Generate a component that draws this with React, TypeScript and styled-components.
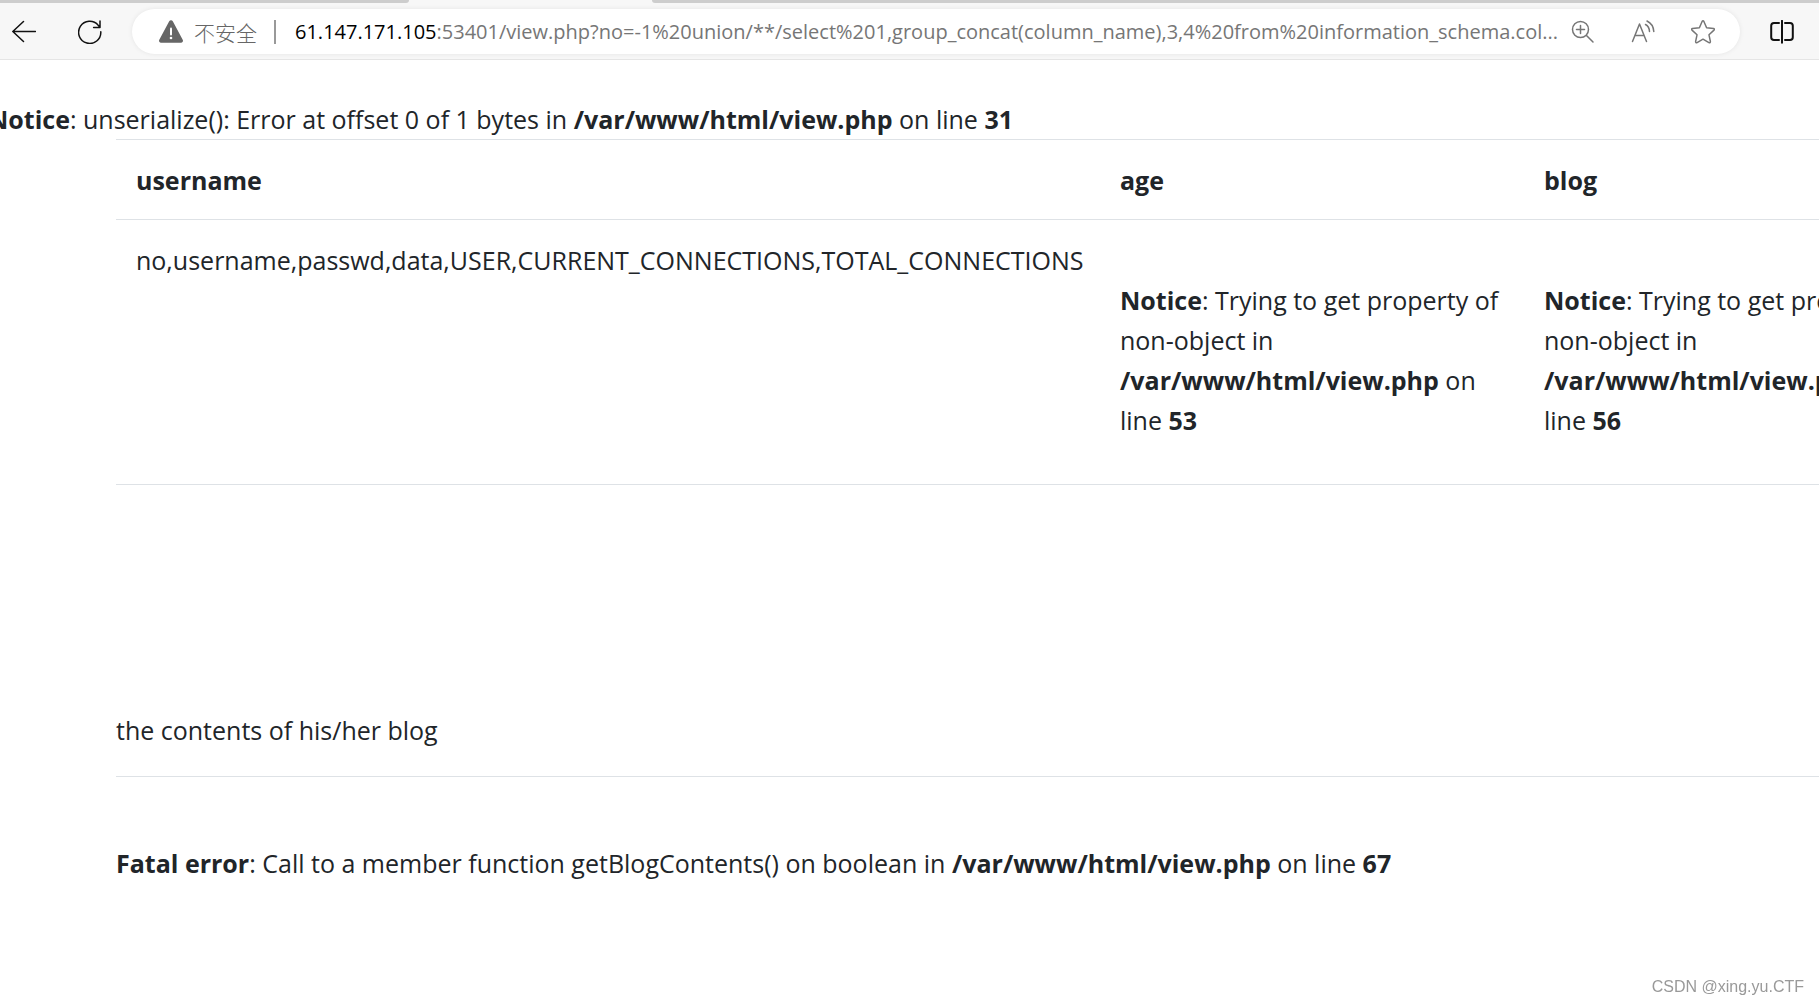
import React from "react";
import styled, { createGlobalStyle } from "styled-components";

const GlobalStyle = createGlobalStyle`
  *, *::before, *::after { box-sizing: border-box; }
  html, body { margin: 0; background: #fff; overflow: hidden; }
  body {
    font-family: "Open Sans", "Noto Sans", "Noto Sans CJK SC", sans-serif;
    font-size: 25px;
    line-height: 40px;
    color: #212529;
  }
`;

const Header = styled.header`
  background: #f7f7f7;
  border-bottom: 1px solid #e5e5e5;
`;

const TabStrip = styled.div`
  display: flex;
  justify-content: space-between;
  gap: 243px;
  height: 3px;
`;

const InactiveTabs = styled.div<{ $side: "left" | "right" }>`
  background: #cdcdcd;
  flex: ${(p) => (p.$side === "left" ? "0 0 409px" : "1 1 auto")};
  border-radius: ${(p) => (p.$side === "left" ? "0 0 4px 0" : "0 0 0 4px")};
`;

const Toolbar = styled.div`
  display: flex;
  align-items: center;
  gap: 30px;
  padding: 6px 25px 5px 12px;
`;

const NavButtons = styled.nav`
  display: flex;
  gap: 42px;
`;

const IconButton = styled.button<{ $color?: string }>`
  display: flex;
  flex: none;
  width: 24px;
  height: 24px;
  padding: 0;
  border: 0;
  background: none;
  color: ${(p) => p.$color ?? "#111"};
`;

const AddressBar = styled.div`
  display: flex;
  flex: 1;
  align-items: center;
  min-width: 0;
  height: 45px;
  padding: 0 25px 0 27px;
  border-radius: 23px;
  background: #fff;
  box-shadow: 0 0 5px rgba(0, 0, 0, 0.08);
  font-size: 20px;
  line-height: 28px;
`;

const SecurityButton = styled.button`
  display: flex;
  flex: none;
  align-items: center;
  gap: 11px;
  padding: 0;
  border: 0;
  background: none;
  color: #666;
  font: 21px/26px "Noto Sans CJK SC", sans-serif;
  font-weight: 300;
`;

const Divider = styled.span`
  flex: none;
  width: 2px;
  height: 24px;
  margin: 0 19px 0 17px;
  background: #999;
`;

const Host = styled.label`
  flex: none;
  color: #000;
`;

const UrlInput = styled.input`
  flex: 1;
  min-width: 0;
  padding: 0;
  border: 0;
  outline: 0;
  background: none;
  color: #767676;
  font: inherit;
`;

const AddressActions = styled.div`
  display: flex;
  gap: 36px;
  margin-left: 8px;
`;

const Page = styled.main`
  margin-left: -12px;
  padding-top: 39px;
`;

const Message = styled.p`
  margin: 0;
`;

const Container = styled.div`
  padding-left: 128px;
`;

const UserTable = styled.table`
  width: 1832px;
  table-layout: fixed;
  border-collapse: separate;
  border-spacing: 0;
  border-bottom: 1px solid #dee2e6;
`;

const Column = styled.col<{ $width: number }>`
  width: ${(p) => p.$width}px;
`;

const HeadCell = styled.th`
  padding: 20px 20px 19px;
  border-top: 1px solid #dee2e6;
  text-align: left;
`;

const Cell = styled.td`
  padding: 20px 20px 44px;
  border-top: 1px solid #dee2e6;
  vertical-align: top;
`;

const Contents = styled.section`
  padding-top: 225px;
`;

const Rule = styled.hr`
  margin: 26px 0 66px;
  border: 0;
  border-top: 1px solid #dee2e6;
`;

const Watermark = styled.div`
  position: fixed;
  right: 15px;
  bottom: 8px;
  color: #999;
  font: 16px/20px "Liberation Sans", Arial, sans-serif;
`;

const strokeProps = {
  width: 24,
  height: 24,
  viewBox: "0 0 24 24",
  fill: "none",
  stroke: "currentColor",
  strokeWidth: 1.5,
  strokeLinecap: "round" as const,
  strokeLinejoin: "round" as const,
};

const BackIcon = () => (
  <svg {...strokeProps}>
    <path d="M23.5 11.5H.8M11.5 1.5L.8 11.5L11.5 21.5" />
  </svg>
);

const RefreshIcon = () => (
  <svg {...strokeProps}>
    <path d="M22.8 11.8A11.1 11.1 0 1 1 20.2 5.2L22 7.2M22 1V7.4H15.6" />
  </svg>
);

const WarningIcon = () => (
  <svg width="24" height="24" viewBox="0 0 24 24">
    <path
      d="M10.2 1.3a2.1 2.1 0 0 1 3.6 0l9.9 18.4a2 2 0 0 1-1.8 3H2.1a2 2 0 0 1-1.8-3z"
      fill="#666"
    />
    <path d="M12 8.5v6" stroke="#fff" strokeWidth="2" strokeLinecap="round" />
    <circle cx="12" cy="18" r="1.3" fill="#fff" />
  </svg>
);

const ZoomIcon = () => (
  <svg {...strokeProps}>
    <circle cx="9.5" cy="9.5" r="8" />
    <path d="M15.5 15.5L22 22M9.5 5.5v8M5.5 9.5h8" />
  </svg>
);

const ReadAloudIcon = () => (
  <svg {...strokeProps}>
    <path d="M1.5 21.5L8.500 4L15.5 21.5M4 15.5H13" />
    <path d="M14.5 4.500Q18.300 6.500 18.500 11.500M16 1Q22.300 4 22.800 11.500" />
  </svg>
);

const StarIcon = () => (
  <svg {...strokeProps}>
    <path d="M11.1 1.500q.9-1.300 1.800 0l2.700 6.200 6.900.8q1.500.4.500 1.600l-5 4.700 1.400 6.800q0 1.600-1.500 1L12 19.200l-5.900 3.400q-1.500.6-1.500-1L6 14.800 1 10.100q-1-1.200.5-1.600l6.900-.8z" />
  </svg>
);

const SplitIcon = () => (
  <svg {...strokeProps} strokeWidth={2}>
    <path d="M9 3H4Q1.200 3 1.200 5.800V17.200Q1.200 20 4 20H9M15 3H20Q22.800 3 22.800 5.800V17.200Q22.800 20 20 20H15M12 .8V22.800" />
  </svg>
);

const PropertyNotice = ({ line }: { line: number }) => (
  <>
    <br />
    <b>Notice</b>: Trying to get property of non-object in{" "}
    <b>/var/www/html/view.php</b> on line <b>{line}</b>
    <br />
  </>
);

export default function App() {
  return (
    <>
      <GlobalStyle />
      <Header>
        <TabStrip>
          <InactiveTabs $side="left" />
          <InactiveTabs $side="right" />
        </TabStrip>
        <Toolbar>
          <NavButtons>
            <IconButton aria-label="Back"><BackIcon /></IconButton>
            <IconButton aria-label="Refresh"><RefreshIcon /></IconButton>
          </NavButtons>
          <AddressBar>
            <SecurityButton>
              <WarningIcon />
              不安全
            </SecurityButton>
            <Divider />
            <Host htmlFor="url">61.147.171.105</Host>
            <UrlInput
              id="url"
              type="text"
              spellCheck={false}
              defaultValue=":53401/view.php?no=-1%20union/**/select%201,group_concat(column_name),3,4%20from%20information_schema.col..."
            />
            <AddressActions>
              <IconButton $color="#767676" aria-label="Zoom"><ZoomIcon /></IconButton>
              <IconButton $color="#767676" aria-label="Read aloud"><ReadAloudIcon /></IconButton>
              <IconButton $color="#767676" aria-label="Add to favorites"><StarIcon /></IconButton>
            </AddressActions>
          </AddressBar>
          <IconButton aria-label="Split screen"><SplitIcon /></IconButton>
        </Toolbar>
      </Header>
      <Page>
        <Message>
          <b>Notice</b>: unserialize(): Error at offset 0 of 1 bytes in{" "}
          <b>/var/www/html/view.php</b> on line <b>31</b>
        </Message>
        <Container>
          <UserTable>
            <colgroup>
              <Column $width={984} />
              <Column $width={424} />
              <Column $width={424} />
            </colgroup>
            <thead>
              <tr>
                <HeadCell>username</HeadCell>
                <HeadCell>age</HeadCell>
                <HeadCell>blog</HeadCell>
              </tr>
            </thead>
            <tbody>
              <tr>
                <Cell>no,username,passwd,data,USER,CURRENT_CONNECTIONS,TOTAL_CONNECTIONS</Cell>
                <Cell><PropertyNotice line={53} /></Cell>
                <Cell><PropertyNotice line={56} /></Cell>
              </tr>
            </tbody>
          </UserTable>
          <Contents>
            <Message>the contents of his/her blog</Message>
            <Rule />
            <Message>
              <b>Fatal error</b>: Call to a member function getBlogContents() on boolean in{" "}
              <b>/var/www/html/view.php</b> on line <b>67</b>
            </Message>
          </Contents>
        </Container>
      </Page>
      <Watermark>CSDN @xing.yu.CTF</Watermark>
    </>
  );
}
